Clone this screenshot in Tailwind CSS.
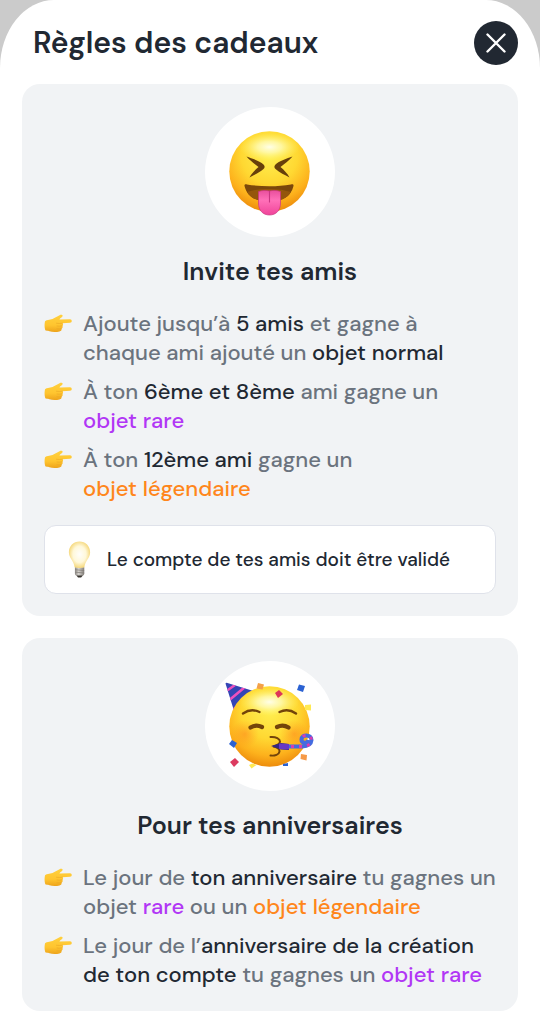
<!DOCTYPE html>
<html lang="fr">
<head>
<meta charset="utf-8">
<meta name="viewport" content="width=device-width, initial-scale=1">
<title>Règles des cadeaux</title>
<script src="https://cdn.jsdelivr.net/npm/@tailwindcss/browser@4"></script>
</head>
<body class="min-h-screen bg-[#cbcbcb] font-['DM_Sans',Inter,sans-serif] text-[#212832]">
<svg class="absolute size-0" aria-hidden="true">
  <defs>
    <radialGradient id="face" cx=".5" cy=".3" r=".7">
      <stop offset="0" stop-color="#fff052"/><stop offset=".5" stop-color="#ffd832"/><stop offset=".8" stop-color="#fdb11c"/><stop offset="1" stop-color="#ed8c0c"/>
    </radialGradient>
    <radialGradient id="shine"><stop stop-color="#fffee8"/><stop offset=".4" stop-color="#fffbb8" stop-opacity=".8"/><stop offset="1" stop-color="#fff36a" stop-opacity="0"/></radialGradient>
    <linearGradient id="hand" x2="0" y2="1"><stop stop-color="#ffd03e"/><stop offset=".6" stop-color="#ffc52f"/><stop offset="1" stop-color="#eda31b"/></linearGradient>
    <radialGradient id="blush"><stop stop-color="#ff7a1c" stop-opacity=".45"/><stop offset="1" stop-color="#ff8a1c" stop-opacity="0"/></radialGradient>
    <radialGradient id="glass" cx=".5" cy=".48" r=".56"><stop stop-color="#fffefb"/><stop offset=".55" stop-color="#fff8d9"/><stop offset="1" stop-color="#f3d168"/></radialGradient>
    <linearGradient id="metal"><stop stop-color="#8b8782"/><stop offset=".4" stop-color="#d6d3ce"/><stop offset="1" stop-color="#827d78"/></linearGradient>
    <linearGradient id="tongue" x2="0" y2="1"><stop stop-color="#e94f9d"/><stop offset=".4" stop-color="#ff70b8"/><stop offset="1" stop-color="#f0449a"/></linearGradient>
    <symbol id="point" viewBox="0 0 28 19">
      <path fill="url(#hand)" d="M.8 8.5C1 6.3 2 6.4 4 5.9L8.5 5 15.600 1.200C17 .5 18.900.8 18.600 2.100 18.400 3.300 15.700 4.500 15.500 5.500L26 5.200C28.300 5.200 28.300 8.600 26 8.700L18.500 9.200C19.500 10.200 19.200 11.300 18.300 11.800 19 13 18.600 14.200 17.500 14.600 17.900 16 17.200 17.200 15.500 17.500 12 18.300 8 18.200 5.500 17.300 3.500 16.600 1.700 17.500 1 15.300 .4 13 .5 10.500.8 8.500Z"/>
      <path fill="none" stroke="#e5a023" stroke-width=".5" stroke-linecap="round" d="M12.500 9.300Q15 9.800 18.500 9.200M13 12Q15.500 12.500 18.300 11.800M13 14.800Q15.500 15.300 17.500 14.600"/>
    </symbol>
  </defs>
</svg>
<main class="min-h-screen bg-white px-[22px] pb-3 [border-radius:54px_54px_0_0/68px_68px_0_0]">
  <header class="flex h-[84px] items-center justify-between pt-0.5 pl-[11px]">
    <h1 class="text-[30px] leading-9 font-semibold">Règles des cadeaux</h1>
    <button type="button" aria-label="Fermer" class="flex size-11 items-center justify-center rounded-full bg-[#212832]">
      <svg class="size-5" viewBox="0 0 20 20" fill="none" stroke="white" stroke-width="2.400" stroke-linecap="round"><path d="m1.500 1.500 17 17M18.500 1.500 1.500 18.500"/></svg>
    </button>
  </header>

  <section class="rounded-[18px] bg-[#f1f3f5] px-[22px] pt-[23px] pb-[22px]">
    <div class="mx-auto flex size-[130px] items-center justify-center rounded-full bg-white">
      <svg class="size-[110px]" viewBox="0 0 110 110" role="img" aria-label="Visage tirant la langue">
        <circle cx="54.500" cy="54.500" r="40.200" fill="url(#face)"/>
        <ellipse cx="54.500" cy="30" rx="30" ry="14" fill="url(#shine)"/>
        <g fill="#67400b">
          <path d="M31.500 39.500C37 41.500 45 44 48.500 47.500 50 49 50 50.500 48.500 52 44.500 55.500 39 58 34.500 60.500 36.500 56.500 40 53 43.500 50 39.500 47 34.500 43 31.500 39.500Z"/>
          <path d="M77.500 39.500C72 41.500 64 44 60.500 47.500 59 49 59 50.500 60.500 52 64.500 55.500 70 58 74.500 60.500 72.500 56.500 69 53 65.500 50 69.500 47 74.500 43 77.500 39.500Z"/>
        </g>
        <path fill="#7b470b" d="M29.500 69C29.200 67.500 30.500 67 32 67.400 46 69.800 63 69.800 76 67.400 77.800 67 78.800 67.500 78.500 69 76 79.500 67.500 84.500 54 84.500 40.500 84.500 32 79.500 29.500 69Z"/>
        <path fill="#94560c" d="M32 75Q43 71.500 54 72 65 71.500 76 75C72 82 64 84.500 54 84.500 44 84.500 36 82 32 75Z"/>
        <path fill="url(#tongue)" stroke="#cc3580" stroke-width=".7" d="M43.500 74.500C47 73.300 51 73 54.500 74 58 73 62 73.300 65.500 74.500V86C65.500 93.500 61 98 54.500 98S43.500 93.500 43.500 86Z"/>
        <path stroke="#c93682" stroke-width="1.100" stroke-linecap="round" d="M54.500 74v11"/>
      </svg>
    </div>
    <h2 class="mt-[21px] text-center text-[25px] leading-7 font-semibold">Invite tes amis</h2>
    <ul class="mt-[23px] flex flex-col gap-2.5 text-[22px] leading-[29px] font-medium whitespace-nowrap text-[#6b737e]">
      <li class="flex gap-[11px]"><svg class="mt-[5px] h-[19px] w-7 shrink-0" aria-hidden="true"><use href="#point"/></svg><p>Ajoute jusqu’à <span class="text-[#212832]">5 amis</span> et gagne à<br>chaque ami ajouté un <span class="text-[#212832]">objet normal</span></p></li>
      <li class="flex gap-[11px]"><svg class="mt-[5px] h-[19px] w-7 shrink-0" aria-hidden="true"><use href="#point"/></svg><p>À ton <span class="text-[#212832]">6ème et 8ème</span> ami gagne un<br><span class="text-[#b136f5]">objet rare</span></p></li>
      <li class="flex gap-[11px]"><svg class="mt-[5px] h-[19px] w-7 shrink-0" aria-hidden="true"><use href="#point"/></svg><p>À ton <span class="text-[#212832]">12ème ami</span> gagne un<br><span class="text-[#ff861b]">objet légendaire</span></p></li>
    </ul>
    <div class="mt-[22px] flex h-[69px] items-center gap-4 rounded-xl border border-[#dfe2ea] bg-white pl-[23px] text-[19px] leading-6 font-medium whitespace-nowrap">
      <svg class="h-[38px] w-[23px] shrink-0" viewBox="0 0 23 39" aria-hidden="true">
        <path fill="url(#metal)" d="M6.800 27h9.600v6.500c0 1.500-2 2.500-2.800 3.300h-4c-.8-.8-2.800-1.800-2.800-3.300Z"/>
        <path fill="#37332f" d="M8.500 35.500h6.200l-1.500 2h-3.200Z"/>
        <path stroke="#7e7974" stroke-width=".7" d="m7 29.500 9.300.8M7 32l9.300.8"/>
        <path fill="url(#glass)" d="M11.500.6C5.300.6.6 5.400.6 11.500c0 6.500 5.200 8.500 5.900 15.500q5 1.500 10 0c.7-7 5.900-9 5.900-15.500C22.400 5.400 17.700.6 11.500.6Z"/>
      </svg>
      <p>Le compte de tes amis doit être validé</p>
    </div>
  </section>

  <section class="mt-[22px] rounded-[18px] bg-[#f1f3f5] px-[22px] pt-[23px] pb-[22px]">
    <div class="mx-auto flex size-[130px] items-center justify-center rounded-full bg-white">
      <svg class="size-[110px]" viewBox="0 0 110 110" role="img" aria-label="Visage de fête">
        <defs><clipPath id="cone"><path d="M10.500 12.500Q11 11.500 12.500 12L40 20.500 20 43Z"/></clipPath></defs>
        <g clip-path="url(#cone)"><path fill="#3445b5" d="M8 8h36v40H8z"/><path fill="none" stroke="#ed50bd" stroke-width="2.600" d="M10 21 20 14M12 31 30 16M15 41 42 20"/></g>
        <circle cx="54.500" cy="55.500" r="40.200" fill="url(#face)"/>
        <ellipse cx="54.500" cy="31" rx="30" ry="14" fill="url(#shine)"/>
        <circle cx="30" cy="63" r="14" fill="url(#blush)"/><circle cx="79" cy="63" r="14" fill="url(#blush)"/>
        <g fill="none" stroke="#73440a" stroke-linecap="round">
          <path stroke-width="2.400" d="M28 42.500Q36 37 44.500 41M64.500 41Q73 37 81 42.500"/>
          <path stroke-width="4.200" d="M35.500 56.500Q41 53 47 56M62 56Q68 53 73.500 56.500"/>
          <path stroke-width="2" d="M55.500 66C61 65.500 65 68 65 70.500 65 73.500 61 74.500 58 75.500 61.500 76 65 77.500 64.500 80.500 64 83.500 60 85 55.500 84.500"/>
        </g>
        <path fill="#352583" d="m56 75 10-3 8 1v6l-8-.5Z"/>
        <path fill="#6737c7" d="m64 72.500 10 .5v5.500l-10-.5Z"/>
        <path fill="none" stroke="#446be0" stroke-width="4" d="M74 75.500h13q9-.5 9.500-6.500c0-6-10-6-10-.5 0 4 6 4.500 7 .5"/>
        <path fill="none" stroke="#db3caf" stroke-width="3" stroke-dasharray="3 5" d="M76 75.500h11q9-.5 9.500-6.500c0-6-10-6-10-.5"/>
        <path fill="#f4a147" d="m43 12 6 1.500-1.500 5-6-1Z"/><path fill="#de3658" d="m60 22 4-3 4 4-5 4Z"/><path fill="#ffe953" d="m90 34 6-.5v6l-6-.5Z"/><path fill="#2b62d3" d="m84 13.500 6 1.500-2 6-6-2Z"/><path fill="#2b62d3" d="m14 73 3-4 5 3-3 5Z"/><path fill="#dc3b60" d="m15 91 5-4 4 4-5 5Z"/><path fill="#ffe953" d="m34 94 3.500-1.500 4 1.500-5 3.500Z"/><path fill="#2b62d3" d="M68 93l5-1v3h-5Z"/><path fill="#f69a47" d="m86 83 6 1-.5 5.500-6-1.500Z"/>
      </svg>
    </div>
    <h2 class="mt-[21px] text-center text-[25px] leading-7 font-semibold">Pour tes anniversaires</h2>
    <ul class="mt-[23px] flex flex-col gap-2.5 text-[22px] leading-[29px] font-medium whitespace-nowrap text-[#6b737e]">
      <li class="flex gap-[11px]"><svg class="mt-[5px] h-[19px] w-7 shrink-0" aria-hidden="true"><use href="#point"/></svg><p>Le jour de <span class="text-[#212832]">ton anniversaire</span> tu gagnes un<br>objet <span class="text-[#b136f5]">rare</span> ou un <span class="text-[#ff861b]">objet légendaire</span></p></li>
      <li class="flex gap-[11px]"><svg class="mt-[5px] h-[19px] w-7 shrink-0" aria-hidden="true"><use href="#point"/></svg><p>Le jour de l’<span class="text-[#212832]">anniversaire de la création<br>de ton compte</span> tu gagnes un <span class="text-[#b136f5]">objet rare</span></p></li>
    </ul>
  </section>
</main>
</body>
</html>
